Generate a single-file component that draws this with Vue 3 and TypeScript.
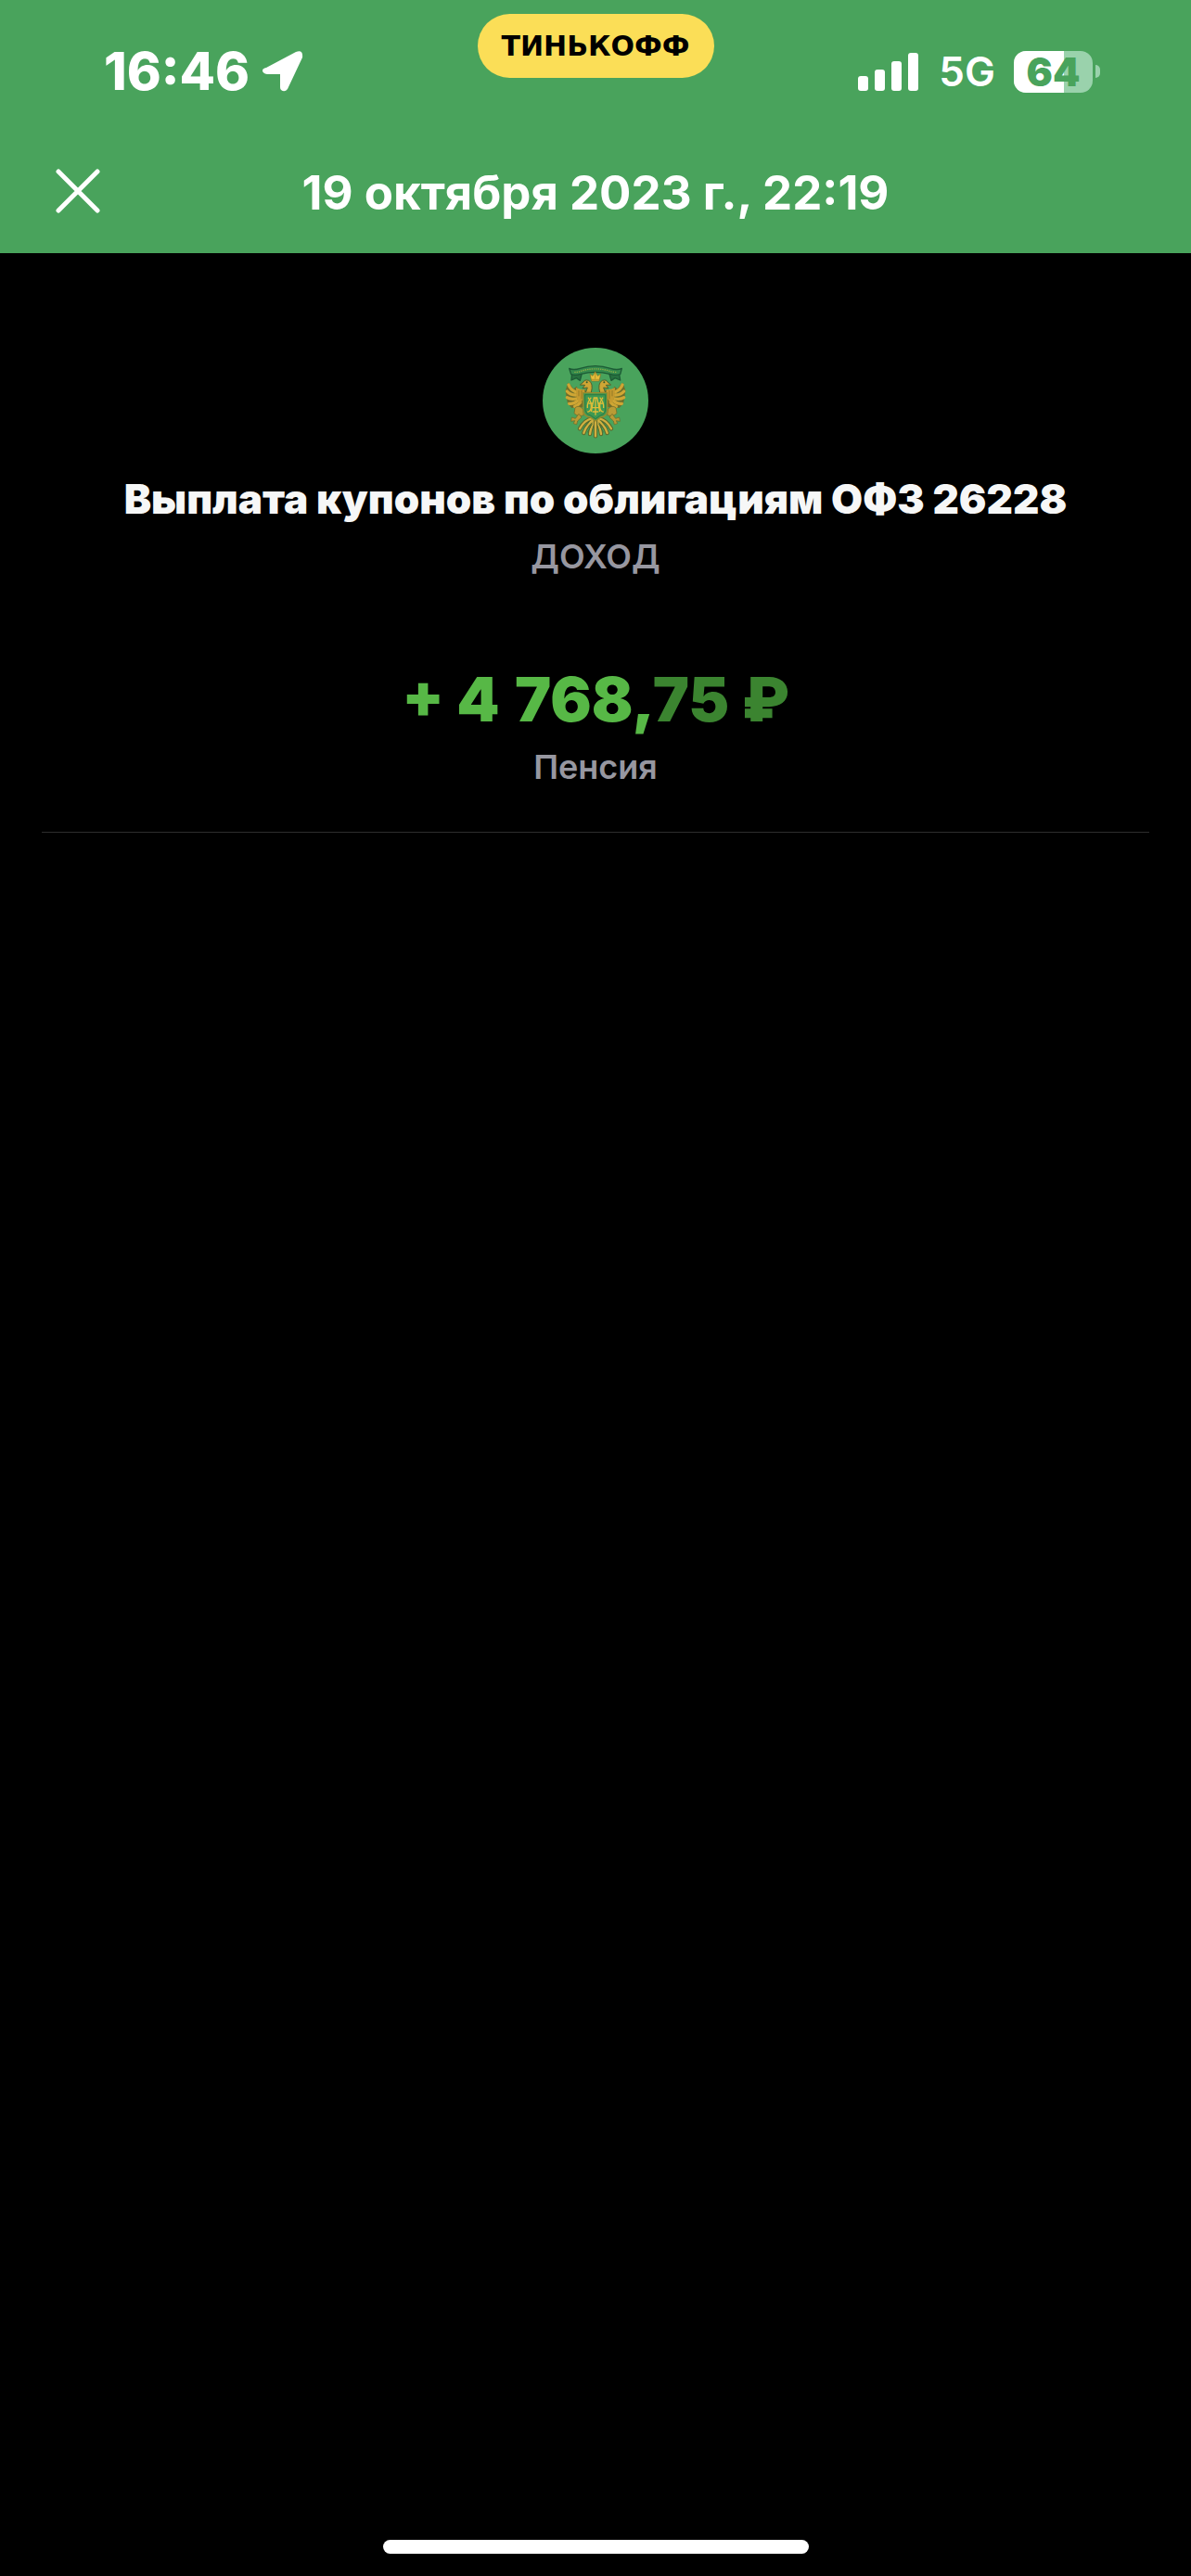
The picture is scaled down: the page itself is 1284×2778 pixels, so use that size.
<script setup lang="ts">
import { computed, ref } from 'vue'

interface Operation {
  date: string
  title: string
  category: string
  amountWhole: string
  amountFraction: string
  account: string
}

const operation: Operation = {
  date: '19 октября 2023 г., 22:19',
  title: 'Выплата купонов по облигациям ОФЗ 26228',
  category: 'ДОХОД',
  amountWhole: '+ 4\u2005768,',
  amountFraction: '75 ₽',
  account: 'Пенсия',
}

const battery = ref(64)
const batteryWidth = computed(() => `${battery.value}%`)
</script>

<template>
  <main class="screen">
    <header class="header">
      <div class="status">
        <div class="status-left">
          <span class="time">16:46</span>
          <svg class="location" viewBox="0 0 44 44" aria-hidden="true">
            <path d="M4 18 36 1Q44-2 43 7L27 41Q24 45 20 42Q19 41 19 39V25H5Q0 24 0 21Q0 19 4 18Z" />
          </svg>
        </div>
        <div class="brand">ТИНЬКОФФ</div>
        <div class="status-right">
          <svg class="signal" viewBox="0 0 65 41" aria-hidden="true">
            <rect x="0" y="25" width="11" height="16" rx="3" />
            <rect x="18" y="18" width="11" height="23" rx="3" />
            <rect x="36" y="9" width="11" height="32" rx="3" />
            <rect x="54" y="0" width="11" height="41" rx="3" />
          </svg>
          <span class="network">5G</span>
          <div class="battery">
            <div class="battery-body">
              <div class="battery-fill" :style="{ width: batteryWidth }"></div>
              <span class="battery-value">{{ battery }}</span>
            </div>
            <div class="battery-tip"></div>
          </div>
        </div>
      </div>
      <div class="nav">
        <button class="close" type="button" aria-label="Закрыть">
          <svg viewBox="0 0 48 48" aria-hidden="true">
            <path d="M3 3 45 45M45 3 3 45" />
          </svg>
        </button>
        <h1 class="date">{{ operation.date }}</h1>
      </div>
    </header>

    <section class="operation">
      <svg class="emblem" viewBox="45 45 342 342" aria-hidden="true">
        <circle cx="216" cy="216" r="171" fill="#49a35c" />
        <!-- ribbon -->
        <g stroke="#1c5a35" stroke-width="4" stroke-linejoin="round">
          <path d="M140 126 138 150 154 143 166 151 172 128ZM292 126 296 150 279 143 267 151 260 128Z" fill="#27713f" />
          <path d="M131 112Q145 119 166 112Q215 96 265 112Q286 119 301 112L296 131Q280 136 262 130Q215 118 169 130Q150 136 137 131Z" fill="#358b4d" />
        </g>
        <path d="M148 124Q160 125 174 119Q216 108 257 119Q272 125 286 124" fill="none" stroke="#8fae45" stroke-width="4" stroke-dasharray="4 3" />
        <g v-for="side in [1, -1]" :key="side" :transform="side === 1 ? undefined : 'translate(432 0) scale(-1 1)'">
          <!-- wing -->
          <path d="M127 158Q137 164 145 178L155 170 161 182 184 180 182 236 158 238 139 240 126 226 122 205 119 184Z" fill="#6f6e2b" />
          <g fill="none" stroke="#cfa634" stroke-width="10" stroke-linecap="round">
            <path d="M129 165Q135 181 152 188" />
            <path d="M124 186Q134 198 152 198" />
            <path d="M124 206Q136 214 153 210" />
            <path d="M131 226Q146 228 158 217" />
            <path d="M149 235Q159 232 167 222" />
          </g>
          <path d="M153 174Q166 182 181 180V205Q172 215 168 226Q158 217 154 203Z" fill="#c49a2f" />
          <path d="M162 183V202M171 183V211" stroke="#937b26" stroke-width="3" fill="none" />
          <!-- head and neck -->
          <path d="M202 190Q210 160 194 151Q180 147 177 156L166 165 182 166 174 176 190 174 184 190Z" fill="#cfa634" stroke="#55602b" stroke-width="3" />
          <circle cx="188" cy="157" r="3" fill="#31592f" />
          <!-- leg and claw -->
          <g stroke="#6d6626" stroke-width="2" fill="#b99b35">
            <path d="M150 239Q163 229 175 243L178 263Q160 270 147 257Z" />
            <path d="M139 270 151 274 162 259 171 270 158 282 155 293 145 290 149 281 137 283Z" />
          </g>
          <!-- tail -->
          <g fill="none" stroke-linecap="round">
            <path d="M205 274Q181 278 165 307M208 280Q188 292 178 321M212 282Q202 298 198 324" stroke="#59672c" stroke-width="13" />
            <path d="M205 274Q181 278 165 307M208 280Q188 292 178 321M212 282Q202 298 198 324" stroke="#d0b040" stroke-width="7" />
            <path d="M196 284 177 306M205 291 191 318" stroke="#477237" stroke-width="3" />
          </g>
        </g>
        <path d="M216 276V331" stroke="#59672c" stroke-width="13" stroke-linecap="round" />
        <path d="M216 276V331" stroke="#d0b040" stroke-width="7" stroke-linecap="round" />
        <!-- crown -->
        <path d="M203 153 198 130 207 136 215 122 223 136 233 130 228 153Z" fill="#e5bd3a" stroke="#7c7027" stroke-width="2" />
        <path d="M203 148H228M215 126V146" stroke="#9a7e25" stroke-width="2" />
        <!-- shield -->
        <path d="M176 191H254V252Q250 268 233 270L216 282 199 270Q181 268 177 252Z" fill="#3e9952" stroke="#9a8b2d" stroke-width="4" />
        <path d="M182 197H248V249Q245 262 230 265L216 275 202 265Q187 262 183 249Z" fill="none" stroke="#24693c" stroke-width="2" />
        <!-- monogram ornament -->
        <g fill="none" stroke="#e0bd39" stroke-width="4">
          <path d="M192 206Q204 222 202 237Q200 253 190 252M202 206Q188 222 190 240M240 206Q228 222 230 237Q232 253 242 252M230 206Q244 222 242 240" />
          <path d="M202 252 211 207H221L230 252M216 207V263M202 239H231M193 225H206M226 225H240M206 252H226" />
        </g>
      </svg>
      <h2 class="title">{{ operation.title }}</h2>
      <p class="caption category">{{ operation.category }}</p>
      <p class="amount">{{ operation.amountWhole }}<span class="fraction">{{ operation.amountFraction }}</span></p>
      <p class="caption account">{{ operation.account }}</p>
    </section>

    <div class="home-indicator"></div>
  </main>
</template>

<style>
body {
  margin: 0;
  background: #000;
}
</style>

<style scoped>
.screen {
  display: flex;
  flex-direction: column;
  min-height: 100vh;
  background: #000;
  color: #fff;
  font-family: Inter, "Liberation Sans", sans-serif;
}

.header {
  background: #49a35c;
}

.status {
  display: grid;
  grid-template-columns: 1fr auto 1fr;
  align-items: start;
  height: 139px;
}

.status-left,
.status-right {
  display: flex;
  align-items: center;
  height: 60px;
  margin-top: 47px;
}

.status-left {
  gap: 14px;
  padding-left: 112px;
}

.time {
  font-size: 56px;
  font-weight: 800;
  line-height: 60px;
}

.location {
  width: 44px;
  height: 44px;
  fill: #fff;
}

.brand {
  display: flex;
  align-items: center;
  justify-content: center;
  width: 255px;
  height: 69px;
  margin-top: 15px;
  border-radius: 35px;
  background: #fbde57;
  color: #000;
  font: 700 30px/36px "DejaVu Sans", sans-serif;
}

.status-right {
  justify-content: flex-end;
  padding-right: 98px;
}

.signal {
  width: 65px;
  height: 41px;
  margin-right: 22px;
  fill: #fff;
}

.network {
  margin-right: 20px;
  font-size: 44px;
  font-weight: 600;
  line-height: 60px;
}

.battery {
  display: flex;
  align-items: center;
  gap: 3px;
}

.battery-body {
  position: relative;
  width: 85px;
  height: 45px;
  border-radius: 13px;
  background: #9ad2ac;
}

.battery-fill {
  height: 100%;
  border-radius: 13px 0 0 13px;
  background: #fff;
}

.battery-value {
  position: absolute;
  inset: 0;
  color: #49a35c;
  font-size: 42px;
  font-weight: 900;
  line-height: 45px;
  text-align: center;
}

.battery-tip {
  width: 5px;
  height: 14px;
  border-radius: 0 7px 7px 0;
  background: #9ad2ac;
}

.nav {
  display: grid;
  grid-template-columns: 168px 1fr 168px;
  align-items: center;
  height: 134px;
}

.close {
  display: flex;
  justify-self: start;
  margin: 0 0 0 44px;
  padding: 16px;
  border: 0;
  background: none;
}

.close svg {
  width: 48px;
  height: 48px;
  fill: none;
  stroke: #fff;
  stroke-width: 5;
  stroke-linecap: round;
}

.date {
  margin: 0;
  padding-top: 4px;
  font-size: 51px;
  font-weight: 700;
  line-height: 60px;
  text-align: center;
}

.operation {
  display: flex;
  flex-direction: column;
  align-items: center;
  margin: 0 45px;
  padding: 102px 0 45px;
  border-bottom: 1px solid #2d2d2d;
  text-align: center;
}

.emblem {
  width: 114px;
  height: 114px;
}

.title {
  margin: 23px 0 0;
  color: #f6f7f7;
  font-size: 44px;
  font-weight: 900;
  line-height: 52px;
}

.caption {
  margin: 0;
  color: #9797a0;
  font-size: 36px;
  font-weight: 600;
  line-height: 50px;
}

.category {
  margin-top: 11px;
}

.amount {
  margin: 89px 0 0;
  color: #57b846;
  font-size: 66px;
  font-weight: 900;
  line-height: 80px;
}

.fraction {
  color: #3b8430;
}

.account {
  margin-top: 8px;
}

.home-indicator {
  width: 459px;
  height: 15px;
  margin: auto auto 24px;
  border-radius: 8px;
  background: #fff;
}
</style>
